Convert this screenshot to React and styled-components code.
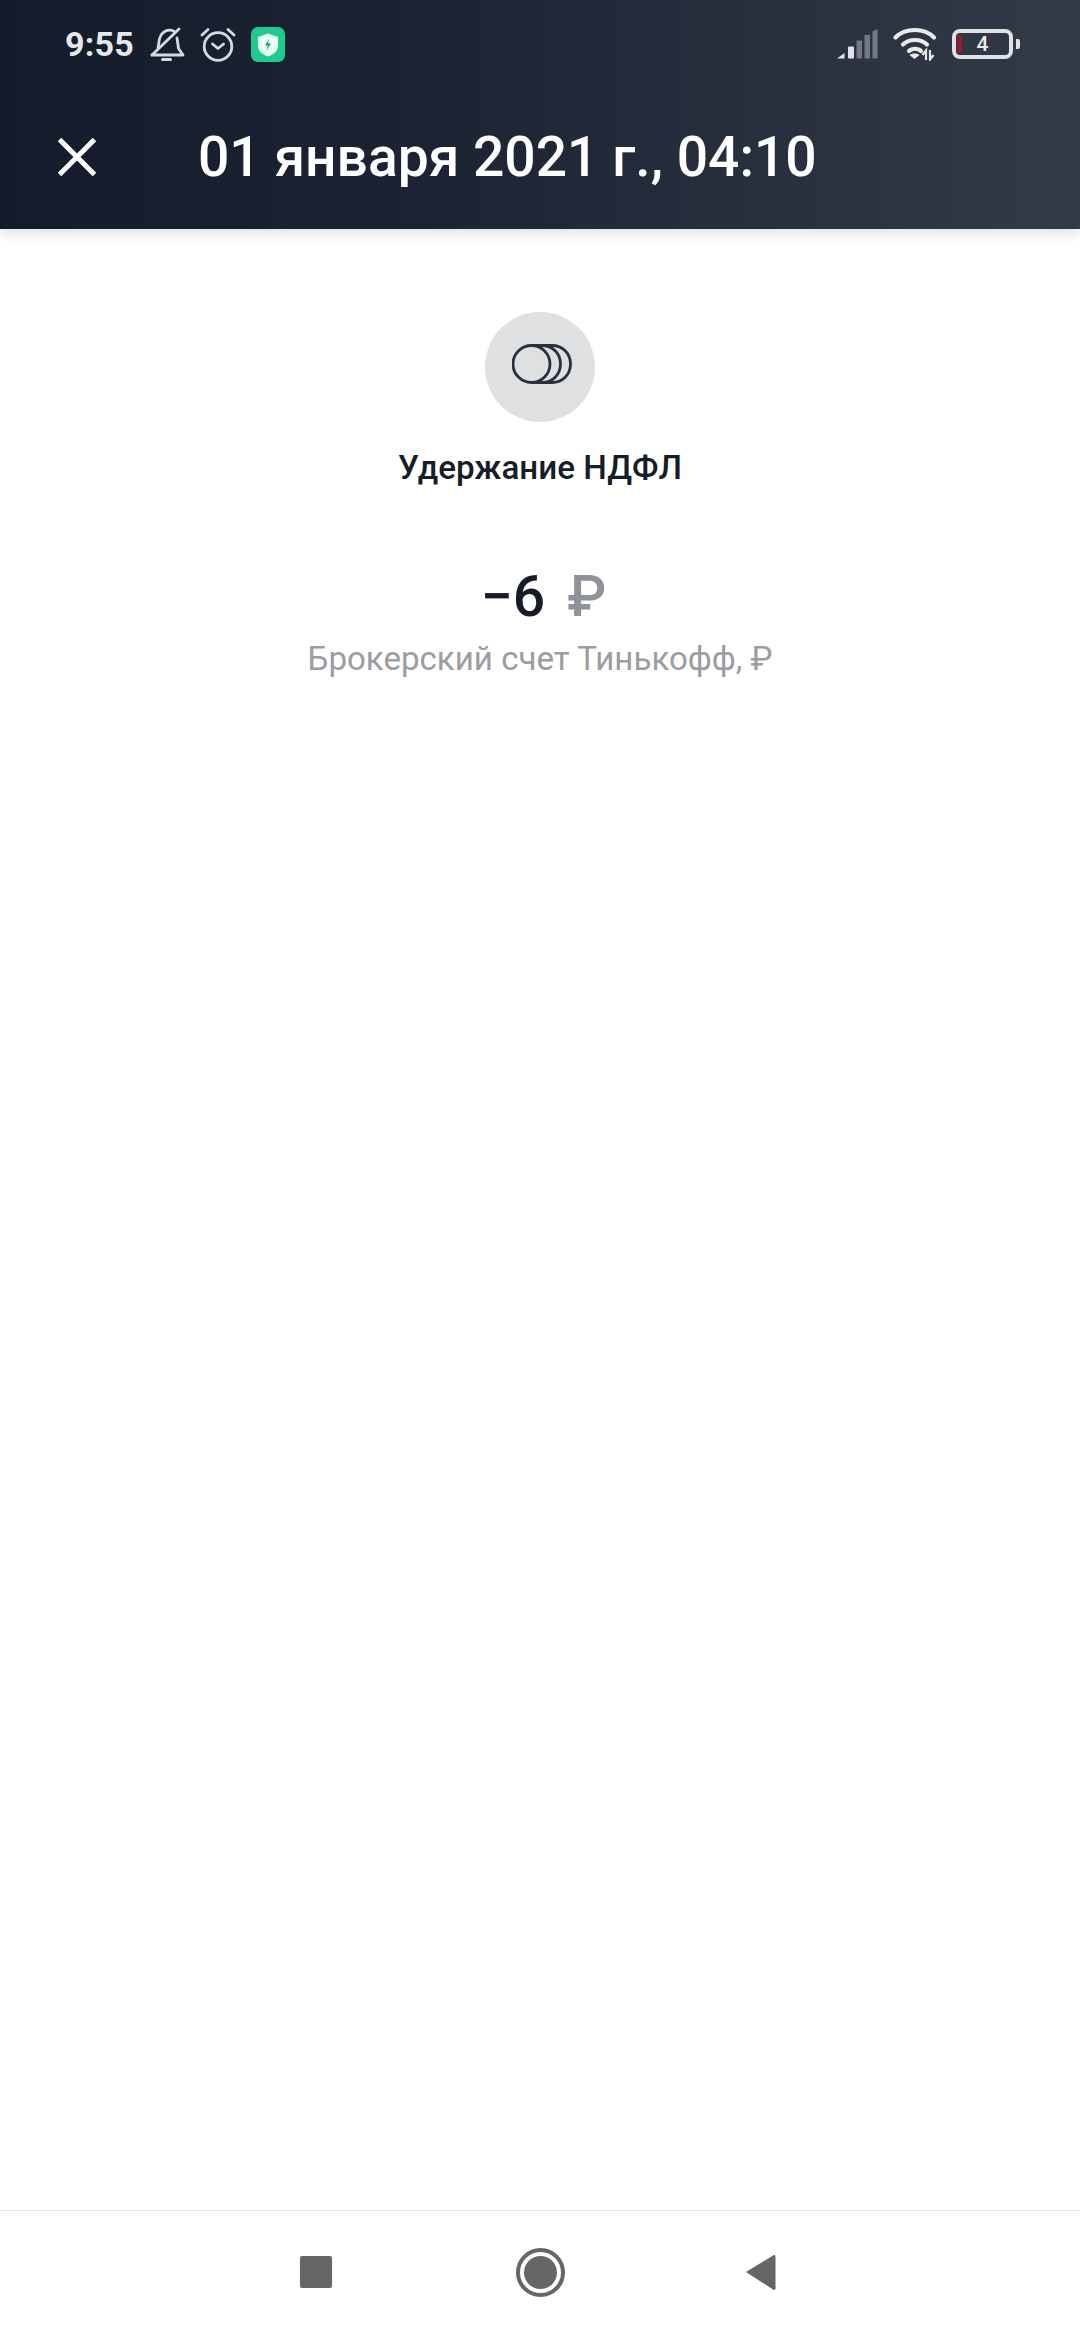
import React from "react";
import styled, { createGlobalStyle } from "styled-components";

const Global = createGlobalStyle`
  html, body { margin: 0; padding: 0; background: #fff; }
  #root { width: 1080px; height: 2340px; }
`;
const Page = styled.div`
  width: 1080px; height: 2340px; display: flex; flex-direction: column;
  font-family: Roboto, "Noto Sans", sans-serif; background: #fff; overflow: hidden;
`;
const Header = styled.header`
  height: 229px; flex: none; display: flex; flex-direction: column;
  background: linear-gradient(90deg, #141c2b 0%, #1c2433 40%, #333a48 100%);
  box-shadow: 0 2px 14px rgba(30, 35, 45, 0.18);
  position: relative; z-index: 1;
`;
const StatusBar = styled.div`
  height: 90px; flex: none; display: flex; align-items: center; justify-content: space-between;
  padding: 0 60px 2px 65px; box-sizing: border-box;
`;
const StatusGroup = styled.div`
  display: flex; align-items: center; gap: ${(p) => p.$gap}px;
`;
const Clock = styled.span`
  font-size: 34px; font-weight: 700; color: #e6e8ec; margin-right: 1px; letter-spacing: 0.2px;
`;
const Toolbar = styled.div`
  flex: 1; display: flex; align-items: center; padding: 0 0 6px 58px;
`;
const CloseButton = styled.div`
  width: 38px; height: 38px; display: flex; margin-right: 102px;
`;
const Title = styled.h1`
  margin: 0; font-size: 55.2px; font-weight: 500; color: #fff; white-space: nowrap;
`;
const Main = styled.main`
  flex: 1; display: flex; flex-direction: column; align-items: center; padding-top: 83px;
`;
const IconCircle = styled.div`
  width: 110px; height: 110px; border-radius: 50%; background: #dee0e2; box-sizing: border-box;
  display: flex; align-items: center; justify-content: center; padding: 0 0 7px 4px;
`;
const Operation = styled.div`
  margin-top: 26px; font-size: 33.2px; font-weight: 500; line-height: 40px; color: #161c28;
`;
const Amount = styled.div`
  margin-top: 77px; padding-left: 7px; font-size: 57px; font-weight: 500; line-height: 64px; color: #161c28;
  display: flex; gap: 22px;
`;
const Currency = styled.span`
  color: #8f9298;
`;
const Account = styled.div`
  margin-top: 10px; font-size: 33.1px; line-height: 40px; color: #9a9da2;
`;
const NavBar = styled.nav`
  height: 130px; flex: none; box-sizing: border-box; border-top: 1px solid #e8e8e8;
  display: flex; align-items: center; padding-left: 300px; padding-bottom: 7px;
`;
const NavSquare = styled.div`
  width: 32px; height: 32px; background: #666; border-radius: 2px;
`;
const NavHome = styled.div`
  width: 49px; height: 49px; margin-left: 184px; border-radius: 50%; border: 4px solid #666;
  box-sizing: border-box; display: flex; align-items: center; justify-content: center;
`;
const NavHomeDot = styled.div`
  width: 33px; height: 33px; border-radius: 50%; background: #666;
`;
const NavBack = styled.svg`
  width: 31px; height: 37px; margin-left: 180px;
`;
const BatteryBody = styled.div`
  width: 61px; height: 30px; box-sizing: border-box; border: 4px solid #dfe1e5; border-radius: 8px;
  position: relative; display: flex; align-items: center; justify-content: center;
  font-size: 21px; font-weight: 500; color: #e8eaee; line-height: 1;
`;
const BatteryLevel = styled.div`
  position: absolute; left: 1px; top: 2px; bottom: 2px; width: 5px; background: #8a1f36; border-radius: 1px;
`;
const BatteryCap = styled.div`
  width: 4px; height: 10px; background: #dfe1e5; border-radius: 0 2px 2px 0; margin-left: 3px;
`;
const Battery = styled.div`
  display: flex; align-items: center;
`;

const BellOff = () => (
  <svg width="35" height="35" viewBox="0 0 35 35" fill="none" stroke="#d6d9de" strokeWidth="2.800" strokeLinecap="round" strokeLinejoin="round">
    <path d="M2 28h31l-4.500-6.500L27 11" />
    <path d="M8 21c.8-3 .7-6 1.600-9.500C11 6 15.500 2.800 20.500 3.200c1.200.1 2.300.4 3.300 1" />
    <path d="M2 28 29 2" />
    <path d="M12.500 32.500h8" strokeWidth="3" />
  </svg>
);
const Alarm = () => (
  <svg width="36" height="35" viewBox="0 0 36 35" fill="none" stroke="#d6d9de" strokeWidth="2.800" strokeLinecap="round" strokeLinejoin="round">
    <circle cx="18" cy="19.500" r="13.800" />
    <path d="M12.500 17 18 21.500 23.500 17" />
    <path d="M2 8 8 2.500M34 8l-6-5.500" />
  </svg>
);
const ShieldBadge = () => (
  <svg width="34" height="35" viewBox="0 0 34 35">
    <rect width="34" height="35" rx="7" fill="#1fca8f" />
    <path d="M17 6.500 27 10v9c0 5-4.500 8.500-10 10.500C11.500 27.500 7 24 7 19v-9z" fill="#e9fbf5" />
    <path d="M18.500 11.500 14 18.500h3l-1.500 5 4.500-7h-3z" fill="#1a9c72" />
  </svg>
);
const Signal = () => (
  <svg width="41" height="30" viewBox="0 0 41 30">
    <path d="M0 29.500 7.500 24v5.500z" fill="#e0e2e6" />
    <rect x="11" y="17.500" width="6" height="12" rx="1" fill="#e0e2e6" />
    <rect x="19.500" y="11.500" width="5.500" height="18" fill="#737883" />
    <rect x="27.500" y="6" width="5.500" height="23.500" fill="#737883" />
    <path d="M35.500 2.500 40.500 0v29.500h-5z" fill="#737883" />
  </svg>
);
const Wifi = () => (
  <svg width="44" height="34" viewBox="0 0 44 34" fill="none" stroke="#e8eaee" strokeWidth="4.200" strokeLinecap="round">
    <path d="M2.500 10.500c9.500-10 29-10 38.500 0" />
    <path d="M10 17.500c6-6 18-6 24 0" />
    <path d="M16 24c3-3 9-3 12 0" />
    <path d="M21.500 32 16.500 28c2.500-2 7.500-2 10 0z" fill="#e8eaee" stroke="none" />
    <path d="M33 33V23.500l-3.500 4.500M37 23v9.500l3.500-4.500" strokeWidth="2.200" strokeLinecap="butt" />
  </svg>
);
const Close = () => (
  <svg width="38" height="38" viewBox="0 0 38 38" stroke="#fff" strokeWidth="5" strokeLinecap="butt">
    <path d="M1.500 1.500l35 35M36.500 1.500l-35 35" />
  </svg>
);
const Coins = () => (
  <svg width="60" height="40" viewBox="0 0 60 40" fill="none" stroke="#2a303c" strokeWidth="2.800">
    <path d="M20 1.500h20c10.500 0 18.500 8 18.500 18.500S50.500 38.500 40 38.500H20" />
    <path d="M30 1.500c10.500 0 18.500 8 18.500 18.500S40.500 38.500 30 38.500" />
    <circle cx="19.500" cy="20" r="18.500" />
  </svg>
);

export default function App() {
  return (
    <Page>
      <Global />
      <Header>
        <StatusBar>
          <StatusGroup $gap={15}>
            <Clock>9:55</Clock>
            <BellOff />
            <Alarm />
            <ShieldBadge />
          </StatusGroup>
          <StatusGroup $gap={15}>
            <Signal />
            <Wifi />
            <Battery>
              <BatteryBody>
                <BatteryLevel />
                4
              </BatteryBody>
              <BatteryCap />
            </Battery>
          </StatusGroup>
        </StatusBar>
        <Toolbar>
          <CloseButton><Close /></CloseButton>
          <Title>01 января 2021 г., 04:10</Title>
        </Toolbar>
      </Header>
      <Main>
        <IconCircle><Coins /></IconCircle>
        <Operation>Удержание НДФЛ</Operation>
        <Amount>−6<Currency>₽</Currency></Amount>
        <Account>Брокерский счет Тинькофф, ₽</Account>
      </Main>
      <NavBar>
        <NavSquare />
        <NavHome><NavHomeDot /></NavHome>
        <NavBack viewBox="0 0 31 37"><path d="M1 18 28.500 1.200c1-.5 2 0 2 1.500v31.600c0 1.500-1 2-2 1.500z" fill="#666" /></NavBack>
      </NavBar>
    </Page>
  );
}
